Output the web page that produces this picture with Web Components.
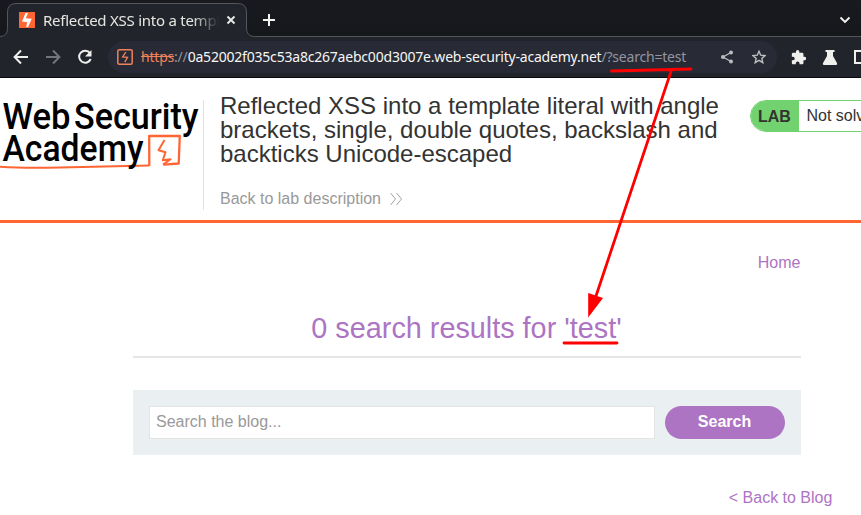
<!DOCTYPE html>
<html lang="en">
<head>
<meta charset="utf-8">
<title>Reflected XSS into a template literal</title>
<style>
html,body{margin:0;height:515px;width:861px;overflow:hidden;background:#fff}
body{font:16px/20px "Liberation Sans",Arial,sans-serif;color:#333332}
</style>
</head>
<body>
<lab-window></lab-window>
<script>
const define = (name, html) => customElements.define(name, class extends HTMLElement {
  constructor() {
    super();
    this.attachShadow({ mode: 'open' }).innerHTML = html;
  }
});

define('tab-strip', `
<style>
:host{display:flex;height:37px;box-sizing:border-box;background:linear-gradient(#191a20,#16171b);color:#e9e9e7;position:relative;padding-left:8px}
.edge{position:absolute;left:0;top:0;z-index:0}
.tab{display:flex;align-items:center;width:238px;padding:3px 0 0 11px;box-sizing:border-box;z-index:1}
.fav{width:16px;height:16px;flex:none}
.title{font:15px/20px "Noto Sans",sans-serif;width:176px;margin-left:8px;white-space:nowrap;overflow:hidden;letter-spacing:-.25px;color:#e6e6e1;-webkit-mask-image:linear-gradient(90deg,#000 150px,transparent 176px)}
.x{width:10px;height:10px;margin-left:7px;flex:none}
.plus{width:12px;height:12px;margin:14px 0 0 17px;z-index:1}
.chev{width:12px;height:8px;margin:16px 10px 0 auto;z-index:1}
</style>
<svg class="edge" width="861" height="37" fill="none"><path d="M0 37h.5Q7.500 36.500 7.500 28.500V12Q7.500 3.500 16 3.500H237.500Q246.500 3.500 246.500 12V28Q246.500 36.500 254.500 36.500H861V37.500H0Z" fill="#22242c"/><path d="M0 36.500Q7.500 36.500 7.500 28.500V12Q7.500 3.500 16 3.500H237.500Q246.500 3.500 246.500 12V28Q246.500 36.500 254.500 36.500H861" stroke="#55565b"/></svg>
<div class="tab">
<svg class="fav" viewBox="0 0 16 16"><path fill="#ff6633" d="M0 0h16v16H0z"/><path fill="#fff" d="M6.500 1H9L6.800 6.200l6 .6L9 15H7.200l1-4.800L3 9.500z"/></svg>
<span class="title">Reflected XSS into a template</span>
<svg class="x" viewBox="0 0 10 10"><path d="m1.500 1.500 7 7m0-7-7 7" stroke="#e9e9e7" stroke-width="1.900"/></svg>
</div>
<svg class="plus" viewBox="0 0 12 12"><path d="M6 0v12M0 6h12" stroke="#f3f3f0" stroke-width="2"/></svg>
<svg class="chev" viewBox="0 0 12 8"><path d="m1.500 1.500 4.500 4.500 4.500-4.500" stroke="#f3f3f0" stroke-width="1.900" fill="none"/></svg>
`);

define('address-bar', `
<style>
:host{display:flex;align-items:center;box-sizing:border-box;height:41px;background:#22242c;border-bottom:1px solid #090a0c;padding-left:13px;overflow:hidden}
svg{flex:none;display:block}
.nav{display:flex;gap:16px}
.pill{display:flex;align-items:center;box-sizing:border-box;height:32px;width:669px;flex:none;background:#282a35;border-radius:16px;margin-left:15px;padding-left:9px}
.url{font:14px/20px "Noto Sans",sans-serif;letter-spacing:-.205px;white-space:nowrap;color:#f6f6f3;margin-left:8px;width:545px}
.bad{color:#f0825a;text-decoration:line-through}
.dim{color:#9395a0}
.share{margin-left:34px}.star{margin-left:18px}
.ext{margin-left:14px}.flask{margin-left:16px}.panel{margin-left:16px}
</style>
<div class="nav">
<svg width="16" height="16" viewBox="0 0 16 16" fill="none" stroke="#efefec" stroke-width="2"><path d="M8 1.500 1.600 8 8 14.500M1.500 8H15"/></svg>
<svg width="16" height="16" viewBox="0 0 16 16" fill="none" stroke="#75767b" stroke-width="2"><path d="M8 1.500 14.400 8 8 14.500M14.500 8H1"/></svg>
<svg width="16" height="16" viewBox="0 0 16 16"><path d="M13 4.200A6 6 0 1 0 13.700 10" fill="none" stroke="#efefec" stroke-width="2"/><path d="M14.500 1v6.500H8z" fill="#efefec"/></svg>
</div>
<div class="pill">
<svg width="16" height="16" viewBox="0 0 16 16"><rect x=".8" y=".8" width="14.400" height="14.400" rx="1.500" fill="none" stroke="#f0825a" stroke-width="1.500"/><path d="M8.800 3.200 5.600 8l4.900.4-2.700 4.700" fill="none" stroke="#f0825a" stroke-width="1.300"/></svg>
<span class="url"><span class="bad">https</span><span class="dim">://</span>0a52002f035c53a8c267aebc00d3007e.web-security-academy.net<span class="dim">/?search=test</span></span>
<svg class="share" width="14" height="14" viewBox="0 0 14 14"><path d="M11 2.500 3 7l8 4.500" fill="none" stroke="#bcbdbf" stroke-width="1.300"/><g fill="#bcbdbf"><circle cx="11" cy="2.500" r="2"/><circle cx="3" cy="7" r="2"/><circle cx="11" cy="11.500" r="2"/></g></svg>
<svg class="star" width="14" height="14" viewBox="0 0 14 14"><path d="m7 1.300 1.700 3.900 4.300.4-3.200 2.900 1 4.200L7 10.400l-3.800 2.300 1-4.200L1 5.600l4.300-.4z" fill="none" stroke="#bcbdbf" stroke-width="1.400"/></svg>
</div>
<svg class="ext" width="15" height="15" viewBox="1 1 21.500 22"><path fill="#efefec" d="M20.500 11H19V7c0-1.100-.9-2-2-2h-4V3.500a2.500 2.500 0 0 0-5 0V5H4c-1.100 0-2 .9-2 2v3.800h1.500a2.700 2.700 0 0 1 0 5.400H2V20c0 1.100.9 2 2 2h3.800v-1.500a2.700 2.700 0 0 1 5.400 0V22H17c1.100 0 2-.9 2-2v-4h1.500a2.500 2.500 0 0 0 0-5z"/></svg>
<svg class="flask" width="16" height="15" viewBox="0 0 16 15"><path fill="#efefec" d="M3.500 0h9v2H11v4l4 7q.8 2-1 2H2q-1.800 0-1-2l4-7V2H3.500z"/></svg>
<svg class="panel" width="14" height="14" viewBox="0 0 14 14"><path d="M1 1h12v12H1z" fill="none" stroke="#efefec" stroke-width="2"/></svg>
`);

define('academy-logo', `
<style>:host{display:block;width:203px;height:82px}svg{display:block}text{font-family:Roboto,sans-serif;font-weight:500;fill:#000}</style>
<svg width="203" height="82" viewBox="0 96 203 82">
<g fill="none" stroke="#ff6633" stroke-linejoin="round"><path d="M0 166.800Q25 168.500 60 167.500L149 165.500" stroke-width="2"/><path d="M149.300 166 149.200 136 179.800 135.800 178.700 163.500 163.500 164.600" stroke-width="2.300"/><path d="M164.500 140 158.500 150.200 165.500 152.300 162.800 160.300 170.500 159.300 163 164.600" stroke-width="2"/></g>
<text x="2.500" y="128.700" font-size="36.500" textLength="68" lengthAdjust="spacingAndGlyphs">Web</text><text x="74" y="128.700" font-size="36.500" textLength="124.500" lengthAdjust="spacingAndGlyphs">Security</text>
<text x="2.500" y="161" font-size="36.500" textLength="141" lengthAdjust="spacingAndGlyphs">Academy</text>
</svg>`);

define('lab-status', `
<style>
:host{display:flex;box-sizing:border-box;height:32px;width:180px;border:1px solid #72d26f;border-radius:16px;overflow:hidden;line-height:30px;flex:none}
b{background:#72d26f;width:48px;padding:1px 0 0 7px;box-sizing:border-box}
span{padding-left:7.500px;white-space:nowrap}
</style><b>LAB</b><span><slot></slot></span>`);

define('lab-header', `
<style>
:host{display:flex;align-items:flex-start;box-sizing:border-box;height:145px;border-bottom:3px solid #ff6633;overflow:hidden}
academy-logo{margin-top:18px;flex:none}
.info{box-sizing:border-box;height:110px;margin-top:22px;width:530px;border-left:1px solid #e2e2e2;padding-left:16px;flex:none}
h2{font:24px/24px "Liberation Sans",Arial,sans-serif;margin:-6px 0 0;width:510px}
a{display:flex;align-items:center;gap:9px;color:#999;margin-top:23px}
a svg{margin-top:-1px}
lab-status{margin:22px 0 0 17px}
</style>
<academy-logo></academy-logo>
<div class="info"><h2>Reflected XSS into a template literal with angle brackets, single, double quotes, backslash and backticks Unicode-escaped</h2>
<a>Back to lab description<svg width="12" height="14" viewBox="0 0 12 14" fill="none" stroke="#999" stroke-width=".9"><path d="m.5 1 5 6-5 6M6.500 1l5 6-5 6"/></svg></a></div>
<lab-status>Not solved</lab-status>`);

define('search-form', `
<style>
:host{display:flex;gap:10px;padding:16px;box-sizing:border-box;height:65px;background:#eaeff2}
.field{flex:1;box-sizing:border-box;height:33px;border:1px solid #e3e3e3;background:#fff;color:#999;padding:0 6px;line-height:30px}
.btn{width:120px;height:33px;border-radius:17px;background:#ad74c3;color:#fff;font-weight:700;text-align:center;line-height:31px;box-sizing:border-box;padding-right:1px}
</style><div class="field">Search the blog...</div><div class="btn">Search</div>`);

define('blog-results', `
<style>
:host{display:flex;flex-direction:column;width:668px;margin-left:133px;color:#ad74c3}
nav{text-align:right;margin-top:30px;line-height:20px;padding-right:.6px}
h1{font:28.800px/40px "Liberation Sans",Arial,sans-serif;text-align:center;margin:35px 0 0;height:48px;padding-right:1px;border-bottom:2px solid #e5e5e5}
search-form{margin-top:32px;flex:none}
.back{align-self:flex-end;margin:33px -31.400px 0 0;line-height:20px}
</style>
<nav>Home</nav><h1>0 search results for 'test'</h1><search-form></search-form><span class="back">&lt; Back to Blog</span>`);

define('red-notes', `
<style>:host{position:absolute;inset:0;pointer-events:none}</style>
<svg width="861" height="515" fill="none" stroke="#f00" stroke-width="2.800" stroke-linecap="round"><path d="M611.500 71 691 69M671.500 70 596 296M564 343H617"/><path d="M588.200 317.500V293L603 298Z" fill="#f00" stroke="none"/></svg>`);

define('lab-window', `
<style>:host{display:flex;flex-direction:column;position:relative;width:861px;height:515px;overflow:hidden}tab-strip,address-bar,lab-header{flex:none}</style>
<tab-strip></tab-strip><address-bar></address-bar><lab-header></lab-header><blog-results></blog-results><red-notes></red-notes>`);
</script>
</body>
</html>
